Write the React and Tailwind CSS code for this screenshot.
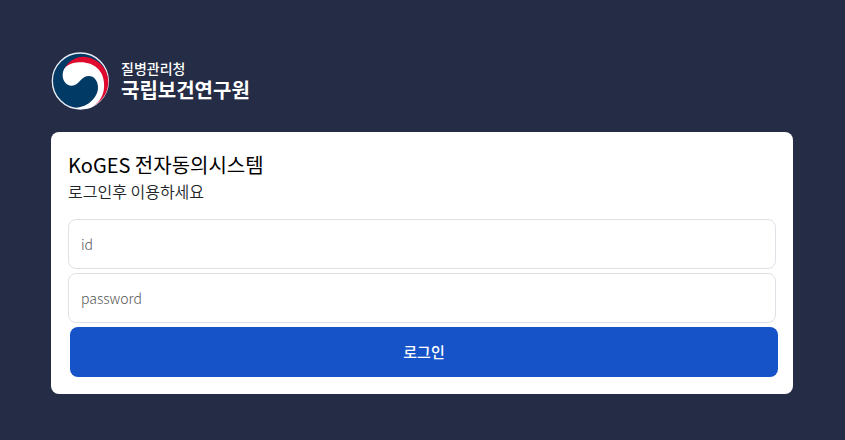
function Emblem() {
  return (
    <svg viewBox="0 0 192 192" className="size-16 shrink-0" aria-hidden="true">
      <circle cx="97" cy="99" r="84" fill="#023a66" stroke="#e9edf3" strokeWidth="4" />
      <path d="M48 66 C60 38 86 24 114 27 C154 32 182 66 181 103 C180 137 162 160 134 175 C152 158 164 135 163 106 C160 74 134 50 98 48 C76 47 60 54 48 66 Z" fill="#e00a2f" />
      <path d="M44 78 C46 54 70 42 98 43 C140 43 166 70 168 104 C171 138 156 162 133 177 C118 184 95 185 74 179 C98 180 120 171 134 155 C145 143 151 130 150 116 C149 98 138 83 121 84 C97 86 94 113 71 113 C54 113 43 98 44 78 Z" fill="#fff" />
    </svg>
  );
}

const fieldClass =
  "block h-[50px] w-full rounded-lg border border-[#dee2e6] bg-white px-3 text-[14px] font-light text-black placeholder:text-[#555] placeholder:opacity-100";

export default function App() {
  return (
    <main className="min-h-screen bg-[#242c46] pt-12 pr-[52px] pb-[46px] pl-[51px] font-['Noto_Sans_CJK_KR',sans-serif]">
      <header className="-ml-[3px] flex items-center gap-[9px] text-white">
        <Emblem />
        <div>
          <p className="text-[14px] leading-5 font-medium">질병관리청</p>
          <p className="text-[20px] leading-6 font-bold">국립보건연구원</p>
        </div>
      </header>
      <section className="mt-5 rounded-lg bg-white px-[17px] pt-5 pb-[17px]">
        <h1 className="text-[20px] leading-[26px] font-normal text-black">KoGES 전자동의시스템</h1>
        <p className="text-[16px] leading-[26px] font-[350] text-[#212529]">로그인후 이용하세요</p>
        <form className="mt-[15px] flex flex-col gap-1" onSubmit={(e) => e.preventDefault()}>
          <input aria-label="id" type="text" placeholder="id" className={fieldClass} />
          <input aria-label="password" type="password" placeholder="password" className={fieldClass} />
          <div className="-mr-[2px] pl-[2px]">
            <button type="submit" className="block h-[50px] w-full rounded-lg bg-[#1753c8] text-[15px] font-medium text-white">
              로그인
            </button>
          </div>
        </form>
      </section>
    </main>
  );
}
